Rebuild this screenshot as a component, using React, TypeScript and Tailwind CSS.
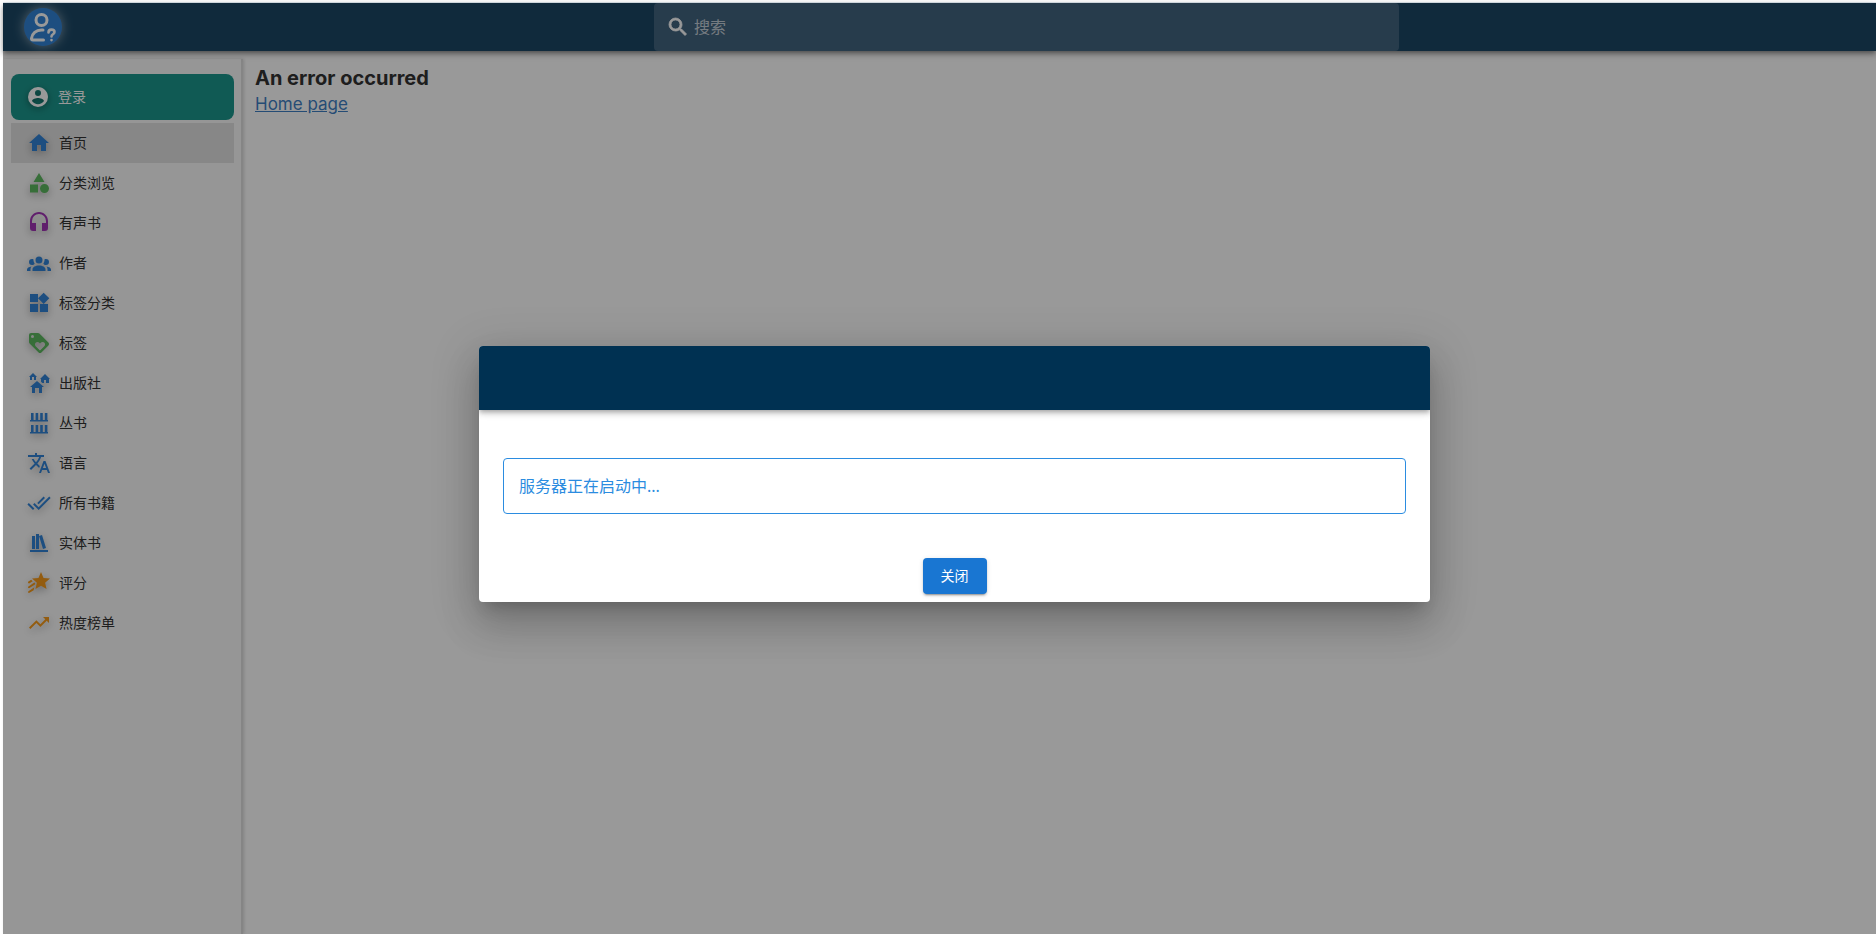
import { useState } from 'react';

const menuItems = [
    { id: 'home', label: '首页', color: 'text-[#3183d6]', path: 'M10,20V14H14V20H19V12H22L12,3L2,12H5V20H10Z' },
    { id: 'browse', label: '分类浏览', color: 'text-[#5cb85f]', path: 'M11,13.5V21.5H3V13.5H11M12,2L17.5,11H6.5L12,2M17.5,13C20,13 22,15 22,17.5C22,20 20,22 17.5,22C15,22 13,20 13,17.5C13,15 15,13 17.5,13Z' },
    { id: 'audio', label: '有声书', color: 'text-[#a135b5]', path: 'M12,1C7,1 3,5 3,10V17A3,3 0 0,0 6,20H9V12H5V10A7,7 0 0,1 12,3A7,7 0 0,1 19,10V12H15V20H18A3,3 0 0,0 21,17V10C21,5 16.97,1 12,1Z' },
    { id: 'authors', label: '作者', color: 'text-[#3183d6]', path: 'M12,5.5A3.5,3.5 0 0,1 15.5,9A3.5,3.5 0 0,1 12,12.5A3.5,3.5 0 0,1 8.5,9A3.5,3.5 0 0,1 12,5.5M5,8C5.56,8 6.08,8.15 6.53,8.42C6.38,9.85 6.8,11.27 7.66,12.38C7.16,13.34 6.16,14 5,14A3,3 0 0,1 2,11A3,3 0 0,1 5,8M19,8A3,3 0 0,1 22,11A3,3 0 0,1 19,14C17.84,14 16.84,13.34 16.34,12.38C17.2,11.27 17.62,9.85 17.47,8.42C17.92,8.15 18.44,8 19,8M5.5,18.25C5.5,16.18 8.41,14.5 12,14.5C15.59,14.5 18.5,16.18 18.5,18.25V20H5.5V18.25M0,20V18.5C0,17.11 1.89,15.94 4.45,15.6C3.86,16.28 3.5,17.22 3.5,18.25V20H0M24,20H20.5V18.25C20.5,17.22 20.14,16.28 19.55,15.6C22.11,15.94 24,17.11 24,18.5V20Z' },
    { id: 'tag-groups', label: '标签分类', color: 'text-[#3183d6]', path: 'M3,3H11V11H3V3M3,13H11V21H3V13M13,13H21V21H13V13M16.66,1.69L22.31,7.34L16.66,13L11,7.34L16.66,1.69Z' },
    { id: 'tags', label: '标签', color: 'text-[#5cb85f]', path: 'M21.41,11.58L12.41,2.58C12.04,2.21 11.53,2 11,2H4A2,2 0 0,0 2,4V11C2,11.53 2.21,12.04 2.59,12.41L11.59,21.41C11.96,21.78 12.47,22 13,22C13.53,22 14.04,21.79 14.41,21.41L21.41,14.41C21.79,14.04 22,13.53 22,13C22,12.47 21.79,11.96 21.41,11.58M5.5,7A1.5,1.5 0 0,1 4,5.5A1.5,1.5 0 0,1 5.5,4A1.5,1.5 0 0,1 7,5.5A1.5,1.5 0 0,1 5.5,7M17.27,15.27L13,19.54L8.73,15.27C8.28,14.81 8,14.19 8,13.5A2.5,2.5 0 0,1 10.5,11C11.19,11 11.82,11.28 12.27,11.74L13,12.46L13.73,11.73C14.18,11.28 14.81,11 15.5,11A2.5,2.5 0 0,1 18,13.5C18,14.19 17.72,14.82 17.27,15.27Z' },
    { id: 'publishers', label: '出版社', color: 'text-[#3183d6]', path: 'M17,16H15V22H12V17H8V22H5V16H3L10,10L17,16M6,2L10,6H9V9H7V6H5V9H3V6H2L6,2M18,3L23,8H22V12H19V9H17V12H15.34L14,10.87V8H13L18,3Z' },
    { id: 'series', label: '丛书', color: 'text-[#3183d6]', path: 'M4,2H6.6V9H8.6V2H11.2V9H13.2V2H15.8V9H17.8V2H20.4V9H21V10.6H3V9H4V2M4,14H6.6V21H8.6V14H11.2V21H13.2V14H15.8V21H17.8V14H20.4V21H21V22.6H3V21H4V14Z' },
    { id: 'languages', label: '语言', color: 'text-[#3183d6]', path: 'M12.87,15.07L10.33,12.56L10.36,12.53C12.1,10.59 13.34,8.36 14.07,6H17V4H10V2H8V4H1V6H12.17C11.5,7.92 10.44,9.75 9,11.35C8.07,10.32 7.3,9.19 6.69,8H4.69C5.42,9.63 6.42,11.17 7.67,12.56L2.58,17.58L4,19L9,14L12.11,17.11L12.87,15.07M18.5,10H16.5L12,22H14L15.12,19H19.87L21,22H23L18.5,10M15.88,17L17.5,12.67L19.12,17H15.88Z' },
    { id: 'books', label: '所有书籍', color: 'text-[#3183d6]', path: 'M0.41,13.41L6,19L7.41,17.58L1.83,12M22.24,5.58L11.66,16.17L7.5,12L6.07,13.41L11.66,19L23.66,7M18,7L16.59,5.58L10.24,11.93L11.66,13.34L18,7Z' },
    { id: 'physical', label: '实体书', color: 'text-[#3183d6]', path: 'M9,3V18H12V3H9M12,5L16,18L19,17L15,4L12,5M5,5V18H8V5H5M3,19V21H21V19H3Z' },
    { id: 'ratings', label: '评分', color: 'text-[#f59a1b]', path: 'M18.09,11.77L19.56,18.1L14,14.74L8.44,18.1L9.9,11.77L5,7.5L11.47,6.96L14,1L16.53,6.96L23,7.5L18.09,11.77M2,12.43C2.19,12.43 2.39,12.37 2.55,12.26L5.75,10.15L4.18,8.79L1.45,10.59C1,10.89 0.86,11.5 1.16,12C1.36,12.27 1.68,12.43 2,12.43M1.16,21.55C1.36,21.84 1.68,22 2,22C2.19,22 2.39,21.95 2.55,21.84L6.66,19.13L7,17.76L7.31,16.31L1.45,20.16C1,20.47 .86,21.09 1.16,21.55M1.45,15.38C1,15.68 .86,16.3 1.16,16.76C1.36,17.06 1.68,17.21 2,17.21C2.19,17.21 2.39,17.16 2.55,17.05L7.97,13.5L8.24,12.31L7.32,11.5L1.45,15.38Z' },
    { id: 'hot', label: '热度榜单', color: 'text-[#f59a1b]', path: 'M16,6L18.29,8.29L13.41,13.17L9.41,9.17L2,16.59L3.41,18L9.41,12L13.41,16L19.71,9.71L22,12V6H16Z' },
];

function Icon({ path, className = '' }: { path: string; className?: string }) {
    return (
        <svg viewBox="0 0 24 24" className={`size-6 shrink-0 fill-current ${className}`} aria-hidden="true">
            <path d={path} />
        </svg>
    );
}

function Header() {
    return (
        <header className="relative z-10 grid h-12 grid-cols-[651fr_745fr_477fr] bg-[#1b4765] shadow-[0_2px_4px_-1px_rgba(0,0,0,0.3),0_4px_5px_rgba(0,0,0,0.2),0_1px_10px_rgba(0,0,0,0.15)]">
            <div className="flex items-center pl-[21px]">
                <button aria-label="Account" className="size-[38px] rounded-full bg-[#3183d6] shadow-[0_0_12px_rgba(255,255,255,0.5)]">
                    <svg viewBox="0 0 38 38" className="size-full fill-none stroke-white" strokeWidth="3" strokeLinecap="round" aria-hidden="true">
                        <circle cx="17.5" cy="12" r="5.5" />
                        <path d="M19.5 32H9c-1.5 0-1.5-.5-1.5-1.5C8 25.5 12 22 17.5 22h1.5" />
                        <path d="M24.5 24.5c0-4 6-3.5 6-.5 0 2.5-3 2-3 4.5M27.5 32v.1" strokeWidth="2.6" />
                    </svg>
                </button>
            </div>
            <label className="flex items-center gap-1 rounded-sm bg-[#42647f] pl-3 text-white">
                <Icon
                    className="stroke-current stroke-[0.8]"
                    path="M9.5,3A6.5,6.5 0 0,1 16,9.5C16,11.11 15.41,12.59 14.44,13.73L14.71,14H15.5L20.5,19L19,20.5L14,15.5V14.71L13.73,14.44C12.59,15.41 11.11,16 9.5,16A6.5,6.5 0 0,1 3,9.5A6.5,6.5 0 0,1 9.5,3M9.5,5C7,5 5,7 5,9.5C5,12 7,14 9.5,14C12,14 14,12 14,9.5C14,7 12,5 9.5,5Z"
                />
                <input type="search" aria-label="搜索" placeholder="搜索" className="min-w-0 flex-1 bg-transparent text-base outline-none placeholder:text-white/70" />
            </label>
        </header>
    );
}

function Sidebar() {
    return (
        <nav className="mt-2 w-60 shrink-0 border-r-2 border-[#dedede] bg-[#fbfbfb] pt-[15px] pr-[7px] pl-2 shadow-[1px_0_3px_rgba(0,0,0,0.15)]">
            <a href="#login" className="mb-[3px] flex h-[46px] items-center gap-2 rounded-lg bg-[#1c968c] pl-[15px] text-sm text-white">
                <Icon
                    className="drop-shadow-[0_2px_3px_rgba(0,0,0,0.4)]"
                    path="M12,19.2C9.5,19.2 7.29,17.92 6,16C6.03,14 10,12.9 12,12.9C14,12.9 17.97,14 18,16C16.71,17.92 14.5,19.2 12,19.2M12,5A3,3 0 0,1 15,8A3,3 0 0,1 12,11A3,3 0 0,1 9,8A3,3 0 0,1 12,5M12,2A10,10 0 0,0 2,12A10,10 0 0,0 12,22A10,10 0 0,0 22,12C22,6.47 17.5,2 12,2Z"
                />
                登录
            </a>
            <ul>
                {menuItems.map((item) => (
                    <li key={item.id}>
                        <a
                            href={`#${item.id}`}
                            className={`flex h-10 items-center gap-2 pl-4 text-sm text-[#333333] ${item.id === 'home' ? 'bg-[#e2e2e2]' : ''}`}
                        >
                            <Icon path={item.path} className={`drop-shadow-[0_3px_4px_rgba(0,0,0,0.3)] ${item.color}`} />
                            {item.label}
                        </a>
                    </li>
                ))}
            </ul>
        </nav>
    );
}

function StartupDialog({ onClose }: { onClose: () => void }) {
    return (
        <div className="absolute inset-0 z-20 flex items-center justify-center bg-black/40 pt-[11px] pl-[30px]">
            <div
                role="dialog"
                aria-modal="true"
                aria-label="服务器正在启动中"
                className="w-full max-w-[951px] overflow-hidden rounded bg-white shadow-[0_11px_15px_-7px_rgba(0,0,0,0.2),0_24px_38px_3px_rgba(0,0,0,0.14),0_9px_46px_8px_rgba(0,0,0,0.12)]"
            >
                <div className="h-16 bg-[#003152] shadow-[0_2px_4px_-1px_rgba(0,0,0,0.2),0_4px_5px_rgba(0,0,0,0.14),0_1px_10px_rgba(0,0,0,0.12)]" />
                <div className="px-6 pt-12 pb-11">
                    <div role="alert" className="rounded border border-[#2b8ce0] p-[15px] text-base leading-6 text-[#2b8ce0]">
                        服务器正在启动中...
                    </div>
                </div>
                <div className="flex justify-center pb-2">
                    <button
                        onClick={onClose}
                        className="h-9 rounded bg-[#1976d2] px-[18px] text-sm text-white shadow-[0_3px_1px_-2px_rgba(0,0,0,0.2),0_2px_2px_rgba(0,0,0,0.14),0_1px_5px_rgba(0,0,0,0.12)]"
                    >
                        关闭
                    </button>
                </div>
            </div>
        </div>
    );
}

export default function App() {
    const [open, setOpen] = useState(true);

    return (
        <div className="flex min-h-screen bg-white pt-[2px] pl-[3px] font-['Noto_Sans','Noto_Sans_CJK_SC',sans-serif]">
            <div className="relative flex flex-1 flex-col border-t border-[#dfe7ee]">
                <Header />
                <div className="flex flex-1">
                    <Sidebar />
                    <main className="px-3 pt-[13px] font-['Inter',sans-serif] text-[#333333]">
                        <h2 className="text-xl leading-7 font-bold">An error occurred</h2>
                        <a href="#home" className="text-[17px] leading-6 text-[#3f7fc4] underline">
                            Home page
                        </a>
                    </main>
                </div>
                {open && <StartupDialog onClose={() => setOpen(false)} />}
            </div>
        </div>
    );
}
